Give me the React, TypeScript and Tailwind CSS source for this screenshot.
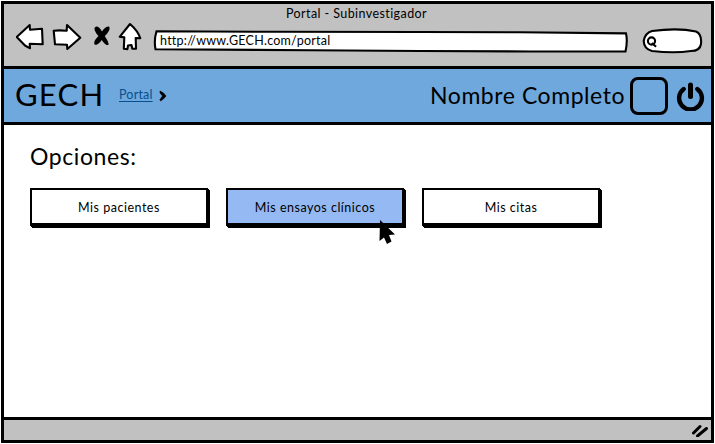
import type { ReactNode } from "react";

function BrowserBar() {
  return (
    <div className="h-[65px] shrink-0 border-b-[3px] border-black bg-[#c1c1c1]">
      <div className="flex h-[17px] items-start justify-center">
        <span className="-ml-[2px] text-[12.5px] leading-[19px] tracking-[0.42px]">Portal - Subinvestigador</span>
      </div>
      <div className="flex h-9 items-start">
        <svg className="ml-3 h-[30px] w-[128px] shrink-0" viewBox="16 21 128 30" fill="white" stroke="black" strokeWidth="2.1" strokeLinejoin="round" strokeLinecap="round">
          <path d="M16.7 37 L29.7 25 L30 29.7 L42 28.7 L42.7 44.3 L29.7 43.7 L30 48.3 L25 45.5 Z" />
          <path d="M53.7 30.7 Q59 30 66.7 30.7 L67 25 L80.3 37.7 L67.3 49 L67 44.7 L55 44.3 L54.5 39 Z" />
          <path d="M95.5 27 C93 28 95.5 33 98.5 36 C96 39 93.5 41 94.5 44.5 C97 46 100.5 42 101.7 40 C103.5 42.5 106.5 46.5 108.7 44.5 C108.5 42 106.5 38.5 104.8 36.2 C107.5 33.5 111 29 109 26.5 C106 26 103.5 29 102 31.5 C100 28.5 98 25.5 95.5 27 Z" fill="black" stroke="none" />
          <path d="M130 24 L119.7 36.8 L124.3 37.4 L123.8 48.7 L127.4 49.2 L128 45.5 L131.5 45 L132.3 48.8 L136 48.7 L135.7 38 L140.3 38.3 Q138 31 130 24 Z" />
        </svg>
        <div className="relative ml-[9px] mt-[8px] h-[24px] w-[476px] shrink-0">
          <svg className="absolute inset-0" viewBox="153 29 476 24" width="476" height="24" fill="white" stroke="black" strokeWidth="2.1">
            <path d="M156.5 31.3 L275 31.8 L420 32 L520 32.2 L626 33.4 Q627.8 41 625.5 51.5 L530 51.5 L420 51 L310 50.3 L155.5 49.2 Q153.8 40 156.5 31.3 Z" />
          </svg>
          <span className="relative ml-[7px] block text-[12.5px] leading-[23px] tracking-[0.24px]">http://www.GECH.com/portal</span>
        </div>
        <svg className="ml-[12px] mt-[6px] h-[28px] w-[64px] shrink-0" viewBox="641 27 64 28" fill="white" stroke="black" strokeWidth="2.1">
          <path d="M652 31 Q678 27.5 696 31.5 Q702 34 701 44 Q700 51 691 51 Q674 53.5 652 51 Q644 49 643.7 41 Q645 33 652 31 Z" />
          <circle cx="651.5" cy="41" r="3.6" />
          <path d="M652 43 L656 46.8" />
        </svg>
      </div>
    </div>
  );
}

function PortalHeader() {
  return (
    <header className="flex h-[56px] shrink-0 items-center border-b-[3px] border-black bg-[#6fa8dc]">
      <span className="-mt-[3px] ml-[11px] w-[104px] text-[31px] leading-[50px] tracking-[1.2px]">GECH</span>
      <a className="-mt-[2px] text-[12.5px] leading-[14px] tracking-[0.2px] text-[#074f91] underline underline-offset-2">Portal</a>
      <svg className="ml-[6px] h-3 w-2" viewBox="0 0 8 12">
        <path d="M1 1 Q5 2.5 7 6 Q4.5 9.5 1.5 11 L1 9.5 L3.5 6 L1 3 Z" fill="black" stroke="black" strokeWidth=".6" />
      </svg>
      <span className="-mt-[1px] ml-auto text-[23px] leading-[50px] tracking-[0.55px]">Nombre Completo</span>
      <span className="ml-[5px] size-[38px] rounded-[8px] border-[3px] border-black" />
      <svg className="ml-[8px] mr-[5px] h-[30px] w-[30px]" viewBox="676 82 30 30" fill="none" stroke="black" strokeWidth="4.4" strokeLinecap="round">
        <path d="M683.7 90 A11.4 11.4 0 1 0 697.3 90" />
        <path d="M690.5 86 V97.5" strokeWidth="5" />
      </svg>
    </header>
  );
}

function Option({ children, active = false }: { children: ReactNode; active?: boolean }) {
  return (
    <button className={`relative h-[38px] w-[178px] border-2 border-black pt-[1px] text-[12.5px] leading-[34px] tracking-[0.5px] shadow-[inset_0_-1px_0_#000,1px_1px_0_#000,2px_2px_0_#000,3px_3px_0_-1px_#000] ${active ? "bg-[#94b9f3]" : "bg-white"}`}>
      {children}
      {active && (
        <svg className="absolute left-[151px] top-[30px] h-[26px] w-[18px]" viewBox="379 220 18 26">
          <path d="M380 220 L395 234.5 L389 235 L391.5 241.5 L387 244 L384 237.5 L379.5 241 Z" fill="black" />
        </svg>
      )}
    </button>
  );
}

export default function App() {
  return (
    <div className="h-[444px] w-[715px] bg-white p-px font-['Lato','Liberation_Sans',sans-serif] text-black">
      <div className="flex h-full flex-col border-[3px] border-black">
        <BrowserBar />
        <PortalHeader />
        <main className="grow pl-[26px] pt-[15px]">
          <h1 className="text-[23px] leading-8 tracking-[0.6px]">Opciones:</h1>
          <div className="mt-[16px] flex gap-[18px]">
            <Option>Mis pacientes</Option>
            <Option active>Mis ensayos clínicos</Option>
            <Option>Mis citas</Option>
          </div>
        </main>
        <footer className="flex h-[23px] shrink-0 items-center justify-end border-t-[3px] border-black bg-[#c1c1c1] pr-[2px]">
          <svg className="h-[14px] w-[18px]" viewBox="692 424 18 14" stroke="black" strokeWidth="3" strokeLinecap="round">
            <path d="M694.5 434 L701 427.5 M698.5 437 L707.5 429.5" />
          </svg>
        </footer>
      </div>
    </div>
  );
}
